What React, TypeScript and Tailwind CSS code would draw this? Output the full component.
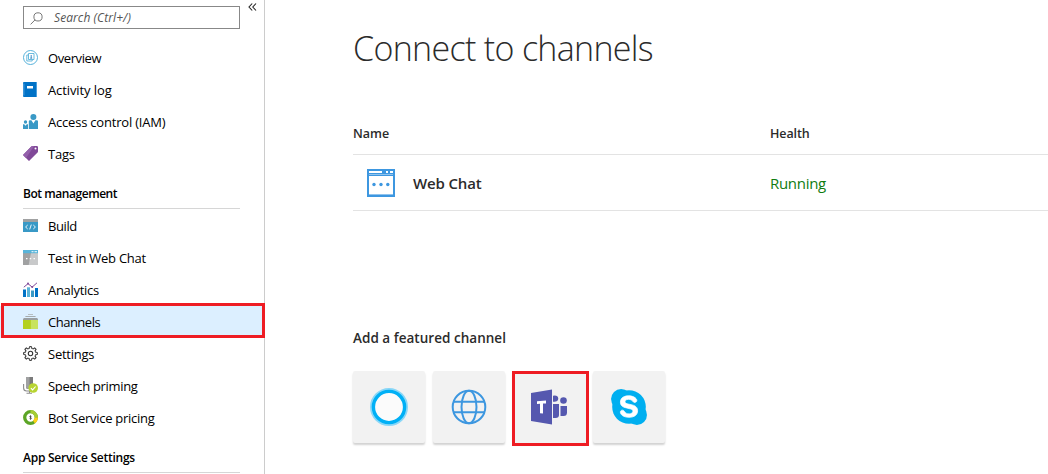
import type { ReactNode } from 'react';

type Item = { label: string; icon: ReactNode; track: string; active?: boolean };

const OverviewIcon = () => (
  <svg width="15" height="15" viewBox="0 0 15 15" fill="none" stroke="#45a9d6">
    <circle cx="7.5" cy="7.5" r="7" strokeWidth="0.9" />
    <path d="M5.5 3.5h5.5v6H5.5zM5.3 5H3.8v6h5.4V9.7" strokeWidth="0.8" />
    <path d="M8.2 5v3M7.2 8.2h2" stroke="#2b7fc0" strokeWidth="0.9" />
  </svg>
);

const LogIcon = () => (
  <svg width="15" height="15" viewBox="0 0 15 15">
    <path d="M1 0h13v15H1a1 1 0 0 1-1-1V1a1 1 0 0 1 1-1z" fill="#0072c6" />
    <path d="M0 1.5h1.5v12H0z" fill="#3a94d8" />
    <path d="M13 0h1v15h-1z" fill="#4d9fdc" />
    <path d="M4 4h6v2.500H4z" fill="#fff" />
  </svg>
);

const AccessIcon = () => (
  <svg width="15" height="15" viewBox="0 0 15 15" fill="#3999c6">
    <circle cx="10.4" cy="3" r="3" />
    <path d="M5.8 15V7.3Q5.8 6.2 7 6.2h1.4l2 3.2 2-3.2h1.4q1.2 0 1.2 1.1V15z" />
    <circle cx="2.5" cy="8" r="1.7" />
    <path d="M0 15v-4q0-1 1-1l1.5 1.8L4 10q1 0 1 1v4z" />
  </svg>
);

const TagIcon = () => (
  <svg width="15" height="15" viewBox="0 0 15 15">
    <path d="M0 9 8 .7Q8.6 0 9.6 0h4.2Q15 0 15 1.2v4.2q0 .8-.7 1.4L6 15z" fill="#804998" />
    <path d="M0 9 8 .7Q8.6 0 9.6 0h1.6L3 12z" fill="#9460ab" />
    <circle cx="12.5" cy="2.5" r="1" fill="#fff" />
  </svg>
);

const BuildIcon = () => (
  <svg width="15" height="13" viewBox="0 0 15 13">
    <path d="M0 0h15v13H0z" fill="#3999c6" />
    <path d="M0 0h15v3H0z" fill="#a0a1a2" />
    <path d="M4.7 6 2.6 8l2.1 2M10.3 6l2.1 2-2.1 2M8.3 5.6l-1.6 4.8" fill="none" stroke="#fff" strokeWidth="0.9" />
  </svg>
);

const TestIcon = () => (
  <svg width="15" height="15" viewBox="0 0 15 15">
    <path d="M0 0h15v15H0z" fill="#c8c9ca" />
    <path d="M0 0h8.5L5.7 15H0z" fill="#a0a1a2" />
    <path d="M0 0h15v3.2H0z" fill="#59b4d9" />
    <path d="M8.5 1h2v1.2h-2zM11.5 1h2.5v1.2h-2.5z" fill="#d8eef7" />
    <path d="M3 8h1.5v1.2H3zM6.7 8h1.5v1.2H6.7zM10.5 8H12v1.2h-1.5z" fill="#fff" />
  </svg>
);

const AnalyticsIcon = () => (
  <svg width="15" height="15" viewBox="0 0 15 15">
    <path d="M0 7.5h3V15H0zM12 6h3v9h-3z" fill="#0072c6" />
    <path d="M4 5.3h3V15H4z" fill="#59b4d9" />
    <path d="M8 8.5h3V15H8z" fill="#3999c6" />
    <path d="M.8 5.2 5 1.7l4.2 3.4L14 .8" fill="none" stroke="#804998" strokeWidth="1" />
    <circle cx="5" cy="1.5" r="1" fill="#804998" />
    <circle cx="9.2" cy="5" r="1" fill="#804998" />
  </svg>
);

const ChannelsIcon = () => (
  <svg width="15" height="15" viewBox="0 0 15 15">
    <path d="M5 0h5v1H5z" fill="#b8bfc2" />
    <path d="M2.4 2h10.200v1H2.400z" fill="#a5abad" />
    <path d="M0 5h15v10H0z" fill="#c8e35e" />
    <path d="M0 5h7.8v10H0z" fill="#b4d01e" />
    <path d="M1 4h13l1 1v1H0V5z" fill="#9a9fa1" />
  </svg>
);

const GEAR_TEETH = [0, 45, 90, 135, 180, 225, 270, 315];

const GearIcon = () => (
  <svg width="15" height="15" viewBox="0 0 15 15" fill="none" stroke="#333">
    <circle cx="7.5" cy="7.5" r="5.200" strokeWidth="1" />
    {GEAR_TEETH.map((a) => (
      <g key={a} transform={`rotate(${a} 7.5 7.5)`}>
        <path d="M6.300 1.500h2.400v1.600H6.300z" fill="#fff" stroke="none" />
        <path d="M6.100 2.700 6.500.600h2l.4 2.100" strokeWidth="1" />
      </g>
    ))}
    <circle cx="7.5" cy="7.5" r="2.200" strokeWidth="1.100" />
  </svg>
);

const SpeechIcon = () => (
  <svg width="15" height="17" viewBox="0 0 15 17">
    <path d="M3 0h7v10q0 2-2 2H5q-2 0-2-2z" fill="#7a7a7a" />
    <path d="M3 0h3.500v12H5q-2 0-2-2z" fill="#a0a1a2" />
    <path d="M.6 7v4q0 3 3 3h4M6.500 14v2.300M3.500 16.300h5.500" fill="none" stroke="#8c8c8c" strokeWidth="1.100" />
    <circle cx="10.200" cy="11" r="4.800" fill="#b8d432" />
    <path d="M7.900 11.200l1.700 1.700 3-3.400" fill="none" stroke="#fff" strokeWidth="1.100" />
  </svg>
);

const PricingIcon = () => (
  <svg width="15" height="15" viewBox="0 0 15 15">
    <circle cx="7.500" cy="7.500" r="5.800" fill="#fff" stroke="#5ca526" strokeWidth="3.300" />
    <path d="M7.500 1.700a5.800 5.800 0 0 1 5.800 5.800" fill="none" stroke="#a6cc33" strokeWidth="3.300" />
    <path d="M13.300 7.500a5.800 5.800 0 0 1-2.300 4.600" fill="none" stroke="#fcd116" strokeWidth="3.300" />
    <path d="M8.500 6.400Q6.600 5.700 6.600 6.700c.1.800 1.900.7 1.900 1.500 0 .9-1.100.8-1.900.4M7.500 5.300v4.400" fill="none" stroke="#333" strokeWidth="0.700" />
  </svg>
);

const resources: Item[] = [
  { label: 'Overview', icon: <OverviewIcon />, track: 'tracking-[-0.4px]' },
  { label: 'Activity log', icon: <LogIcon />, track: 'tracking-[-0.1px]' },
  { label: 'Access control (IAM)', icon: <AccessIcon />, track: 'tracking-[-0.2px]' },
  { label: 'Tags', icon: <TagIcon />, track: 'tracking-[-0.2px]' },
];

const management: Item[] = [
  { label: 'Build', icon: <BuildIcon />, track: 'tracking-[-0.4px]' },
  { label: 'Test in Web Chat', icon: <TestIcon />, track: 'tracking-[-0.25px]' },
  { label: 'Analytics', icon: <AnalyticsIcon />, track: 'tracking-[-0.3px]' },
  { label: 'Channels', icon: <ChannelsIcon />, track: 'tracking-[-0.5px]', active: true },
  { label: 'Settings', icon: <GearIcon />, track: 'tracking-[-0.25px]' },
  { label: 'Speech priming', icon: <SpeechIcon />, track: 'tracking-[-0.33px]' },
  { label: 'Bot Service pricing', icon: <PricingIcon />, track: 'tracking-[-0.28px]' },
];

function NavItem({ label, icon, track, active }: Item) {
  return (
    <li className={`relative flex h-8 items-center pl-[23px] ${active ? 'bg-[#dcefff]' : ''}`}>
      {active && <span className="absolute -top-[3px] left-px h-[35px] w-[264px] border-[3px] border-[#ee1c23] bg-[#dcefff]" />}
      <span className="relative -mt-0.5 flex w-[25px]">{icon}</span>
      <span className={`relative whitespace-nowrap text-[13px] leading-4 text-black ${track}`}>{label}</span>
    </li>
  );
}

function Section({ title, track }: { title: string; track: string }) {
  return (
    <div className="h-10 pl-[23px]">
      <h2 className={`flex h-[39px] w-[217px] items-center border-b border-[#d6d6d6] pt-2.5 text-[12px] font-semibold text-black ${track}`}>{title}</h2>
    </div>
  );
}

function Tile({ children, marked }: { children: ReactNode; marked?: boolean }) {
  return (
    <div className="relative flex size-[72px] items-center justify-center rounded-[2px] bg-[#f2f2f2] shadow-[0_2px_2px_rgba(0,0,0,0.18)]">
      {children}
      {marked && <span className="absolute top-0 -left-px h-[75px] w-[77px] border-[3px] border-[#ee1c23]" />}
    </div>
  );
}

export default function App() {
  return (
    <div className="flex h-[474px] w-[1048px] overflow-hidden bg-white font-['Open_Sans','Noto_Sans',sans-serif]">
      <aside className="w-[265px] shrink-0 border-r border-[#ccc]">
        <div className="flex h-[42px] items-start pt-1.5 pl-[23px]">
          <div className="flex h-[23px] w-[217px] items-center border border-[#888] pl-1.5">
            <svg className="mt-0.5" width="13" height="13" viewBox="0 0 13 13" fill="none" stroke="#777" strokeWidth="1">
              <circle cx="8" cy="4.900" r="4.100" />
              <path d="M5 7.900.600 12.400" />
            </svg>
            <span className="ml-[11px] text-[12px] tracking-[0.08px] text-[#555] italic">Search (Ctrl+/)</span>
          </div>
          <svg className="-mt-[3px] ml-[8px]" width="9" height="8" viewBox="0 0 9 8" fill="none" stroke="#222" strokeWidth="1.100">
            <path d="M4.200.500 1 4l3.200 3.500M8 .500 4.800 4 8 7.500" />
          </svg>
        </div>
        <ul>{resources.map((i) => <NavItem key={i.label} {...i} />)}</ul>
        <Section title="Bot management" track="tracking-[-0.45px]" />
        <ul>{management.map((i) => <NavItem key={i.label} {...i} />)}</ul>
        <Section title="App Service Settings" track="tracking-[-0.25px]" />
      </aside>

      <main className="flex-1 pl-[88px] text-[#2b2b2b]">
        <h1 className="pt-[24px] text-[34px] leading-[48px] font-[330] tracking-[-0.68px] whitespace-nowrap">Connect to channels</h1>
        <div className="mt-[40px] flex h-[43px] items-center border-b border-[#e3e3e3] pt-0.5 text-[12.500px] font-semibold">
          <span className="w-[417px]">Name</span>
          <span className="tracking-[-0.1px]">Health</span>
        </div>
        <div className="flex h-14 items-center border-b border-[#e3e3e3] pt-0.5">
          <span className="-mt-0.5 flex w-[60px] pl-3.5">
            <svg width="28" height="28" viewBox="0 0 28 28">
              <path d="M0 0h28v28H0z" fill="#3d97e0" />
              <path d="M2 2h13v2H2zM19 2h2v2h-2zM23 2h3v2h-3zM2 7h24v18H2z" fill="#fff" />
              <path d="M2 5h24v1H2zM2 25h24v1H2z" fill="#8fc3ee" />
              <circle cx="7" cy="15.500" r="1.700" fill="#3d97e0" />
              <circle cx="14" cy="15.500" r="1.700" fill="#3d97e0" />
              <circle cx="20.800" cy="15.500" r="1.700" fill="#3d97e0" />
            </svg>
          </span>
          <span className="w-[357px] text-[15px] font-semibold tracking-[-0.15px]">Web Chat</span>
          <span className="text-[15px] tracking-[-0.3px] text-[#107c10]">Running</span>
        </div>
        <h2 className="mt-[117px] text-[13.500px] leading-5 font-semibold tracking-[0.03px]">Add a featured channel</h2>
        <div className="mt-[23px] flex gap-2">
          <Tile>
            <svg width="38" height="38" viewBox="0 0 38 38" fill="none">
              <circle cx="19" cy="19" r="17.500" stroke="#8ad7f7" strokeWidth="3" />
              <circle cx="19" cy="19" r="15.600" fill="#fbfbfb" stroke="#00b0f6" strokeWidth="3.400" />
            </svg>
          </Tile>
          <Tile>
            <svg width="36" height="36" viewBox="0 0 36 36" fill="none" stroke="#3d97e0" strokeWidth="2">
              <circle cx="18" cy="18" r="16.300" />
              <ellipse cx="18" cy="18" rx="7.500" ry="16.300" />
              <path d="M2.500 12.700h31M2.500 23.200h31" />
            </svg>
          </Tile>
          <Tile marked>
            <svg width="36" height="36" viewBox="0 0 36 36" fill="#5558af">
              <path d="M0 4 21 .5v35L0 32z" />
              <path d="M22 6.700q5-1 5.300 3-.3 3.500-5.300 3zM22 15h6v11q0 3-3.500 3H22z" />
              <circle cx="32.500" cy="11.500" r="3.300" />
              <path d="M29.500 17H36v6.500q0 3.500-3.500 3.500h-3z" />
              <path d="M6 12.200 15 11.600v2.800l-3 .2v9.800l-3-.2v-9.400l-3 .2z" fill="#fff" />
            </svg>
          </Tile>
          <Tile>
            <svg width="36" height="36" viewBox="0 0 24 24" fill="#00aff0">
              <circle cx="12" cy="12" r="11.200" />
              <circle cx="6.730" cy="6.700" r="6.700" />
              <circle cx="17.270" cy="17.300" r="6.700" />
              <path d="M12.069 18.874c-4.023 0-5.820-1.979-5.820-3.464 0-.765.561-1.296 1.333-1.296 1.723 0 1.273 2.477 4.487 2.477 1.641 0 2.550-.895 2.550-1.811 0-.551-.269-1.160-1.354-1.429l-3.576-.895c-2.880-.724-3.403-2.286-3.403-3.751 0-3.047 2.861-4.191 5.549-4.191 2.471 0 5.393 1.373 5.393 3.199 0 .784-.688 1.240-1.453 1.240-1.469 0-1.198-2.037-4.164-2.037-1.469 0-2.292.664-2.292 1.617s1.153 1.258 2.157 1.487l2.637.587c2.891.649 3.624 2.346 3.624 3.944 0 2.476-1.902 4.324-5.722 4.324" fill="#fff" stroke="#fff" strokeWidth="0.500" />
            </svg>
          </Tile>
        </div>
      </main>
    </div>
  );
}
